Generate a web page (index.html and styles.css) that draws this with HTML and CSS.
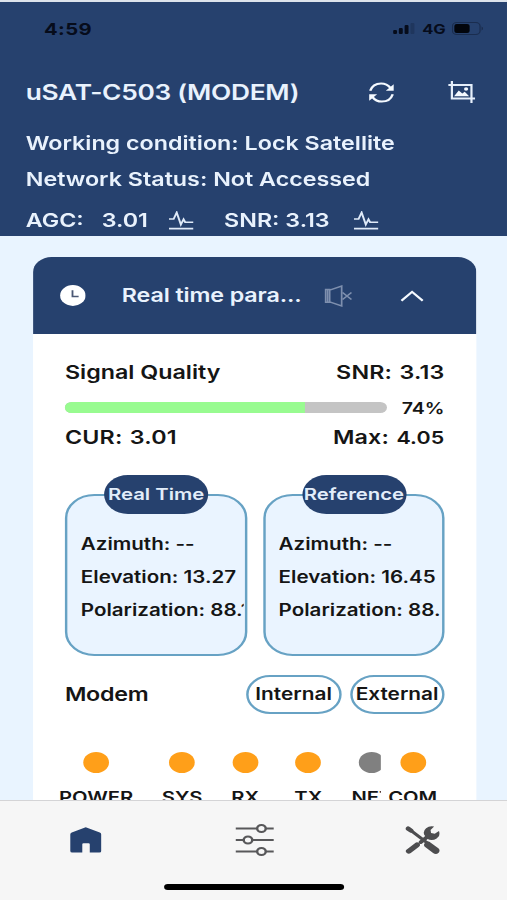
FILE: index.html
```
<!DOCTYPE html>
<html lang="en">
<head>
    <meta charset="UTF-8">
    <meta name="viewport" content="width=device-width, initial-scale=1.0">
    <title>uSAT-C503</title>
    <link rel="stylesheet" href="styles.css">
</head>
<body>
    <div class="screen">
        <header class="header">
            <div class="statusbar">
                <span class="time">4:59</span>
                <div class="signal">
                    <svg class="bars" width="18" height="11" viewBox="0 0 18 11">
                        <rect x="0" y="7" width="3.2" height="4" rx="1"/>
                        <rect x="4.7" y="5" width="3.2" height="6" rx="1"/>
                        <rect x="9.4" y="2" width="3.2" height="9" rx="1"/>
                        <rect x="14.2" y="0" width="3.2" height="11" rx="1" opacity=".2"/>
                    </svg>
                    <span class="network">4G</span>
                    <svg width="26" height="13" viewBox="0 0 26 13">
                        <rect x="0.5" y="0.5" width="22.5" height="12" rx="3.5" fill="none" stroke="#0a1020" opacity=".4"/>
                        <rect x="2" y="2" width="12.5" height="9" rx="2" fill="#02050c"/>
                        <path d="M24.3 4.5v4c1.4-.6 1.4-3.4 0-4z" fill="#0a1020" opacity=".45"/>
                    </svg>
                </div>
            </div>
            <div class="title-row">
                <h1 class="title">uSAT-C503 (MODEM)</h1>
                <svg class="refresh" width="21" height="21" viewBox="0 0 21 21" fill="none" stroke="#f4f9ff" stroke-width="2">
                    <path d="M1.3 8.8C2.8 3.5 6 1.4 10.2 1.4c3.3 0 5.8 1.6 7.6 4.5"/>
                    <path d="M19.7 12.2c-1.5 5.3-4.7 7.4-8.9 7.4-3.3 0-5.8-1.6-7.6-4.5"/>
                    <path d="M20.5 2.2v6.5H14z" fill="#f4f9ff" stroke="none"/>
                    <path d="M.5 18.8v-6.500H7z" fill="#f4f9ff" stroke="none"/>
                </svg>
                <svg width="22" height="22" viewBox="0 0 22 22" fill="none" stroke="#e6effb" stroke-width="1.8">
                    <path d="M3 0v17.500h19M0 4h19v18"/>
                    <path d="M4.800 15.200l3.800-5.800 2.900 3 2-1.700 3.600 4.500z" fill="#f4f9ff" stroke="none"/>
                    <circle cx="14.600" cy="8" r="1.700" fill="#f4f9ff" stroke="none"/>
                </svg>
            </div>
            <p class="line working">Working condition: Lock Satellite</p>
            <p class="line">Network Status: Not Accessed</p>
            <div class="line levels">
                <span class="agc">AGC:</span>
                <span class="agc-value">3.01</span>
                <svg class="pulse" width="20" height="19" viewBox="0 0 20 19">
                    <path d="M0 8h3.800L6.300 1.500l3.400 12 2.200-5.200 1.300 2.900H20"/>
                    <path d="M0 17.600h20"/>
                </svg>
                <span class="snr">SNR: 3.13</span>
                <svg class="pulse" width="20" height="19" viewBox="0 0 20 19">
                    <path d="M0 8h3.800L6.300 1.500l3.400 12 2.200-5.200 1.300 2.900H20"/>
                    <path d="M0 17.600h20"/>
                </svg>
            </div>
        </header>

        <main class="content">
            <section class="card">
                <div class="card-header">
                    <svg width="21" height="21" viewBox="0 0 21 21">
                        <circle cx="10.500" cy="10.500" r="10.400" fill="#fff"/>
                        <path d="M10.200 5.200v6.200h5" fill="none" stroke="#4b5874" stroke-width="1.500"/>
                    </svg>
                    <h2 class="card-title">Real time para...</h2>
                    <svg class="mute" width="23" height="22" viewBox="0 0 23 22" fill="none" stroke="#7e8fae" stroke-width="1.400">
                        <path d="M.8 4.500h3.400v12.700H.8zM2.500 4.500v12.700M4.200 5.200L14 1v20l-9.800-4.200"/>
                        <path d="M14.700 7.500l7.300 7M22 7.500l-7.300 7"/>
                    </svg>
                    <svg width="19" height="12" viewBox="0 0 19 12" fill="none" stroke="#f4f9ff" stroke-width="2">
                        <path d="M.8 10.800l8.700-8.900 8.700 8.900"/>
                    </svg>
                </div>

                <div class="card-body">
                    <div class="row quality">
                        <span>Signal Quality</span>
                        <span class="reading">SNR: 3.13</span>
                    </div>
                    <div class="row progress">
                        <div class="track"><div class="fill" style="width: 74.4%"></div></div>
                        <span class="percent">74%</span>
                    </div>
                    <div class="row minmax">
                        <span class="reading">CUR: 3.01</span>
                        <span class="reading">Max: <span class="max-value">4.05</span></span>
                    </div>

                    <div class="panels">
                        <div class="panel">
                            <span class="badge">Real Time</span>
                            <p>Azimuth: --</p>
                            <p>Elevation: 13.27</p>
                            <p>Polarization: 88.1</p>
                        </div>
                        <div class="panel">
                            <span class="badge">Reference</span>
                            <p>Azimuth: --</p>
                            <p>Elevation: 16.45</p>
                            <p>Polarization: 88.</p>
                        </div>
                    </div>

                    <div class="row modem">
                        <span>Modem</span>
                        <div class="buttons">
                            <button class="pill">Internal</button>
                            <button class="pill">External</button>
                        </div>
                    </div>

                    <div class="leds">
                        <div class="led power"><i></i><span>POWER</span></div>
                        <div class="led"><i></i><span>SYS</span></div>
                        <div class="led"><i></i><span>RX</span></div>
                        <div class="led"><i></i><span>TX</span></div>
                        <div class="led net"><i></i><span>NET</span></div>
                        <div class="led com"><i></i><span>COM</span></div>
                    </div>
                </div>
            </section>
        </main>

        <footer class="footer">
            <nav class="tabs">
                <a class="tab">
                    <svg width="26" height="26" viewBox="0 0 26 26">
                        <path d="M13 .3L24.500 5.500Q25.700 6.200 25.700 7.500V24q0 1.600-1.600 1.600H16.300V17.200q0-1-1-1H11.200q-1 0-1 1V25.600H2Q.4 25.600.4 24V7.500Q.4 6.200 1.600 5.500z" fill="#26416e"/>
                    </svg>
                </a>
                <a class="tab">
                    <svg width="32" height="32" viewBox="0 0 32 32" fill="#f6f6f6" stroke="#58585a" stroke-width="2">
                        <path d="M.5 4.500h31M.5 16h31M.5 27.500h31"/>
                        <circle cx="21.500" cy="4.500" r="3.500"/>
                        <circle cx="10.500" cy="16" r="3.500"/>
                        <circle cx="21.500" cy="27.500" r="3.500"/>
                    </svg>
                </a>
                <a class="tab">
                    <svg width="28" height="28" viewBox="0 0 28 28" fill="none" stroke="#4d4d4f" stroke-linecap="round">
                        <path d="M2.800 25.200l6.700-6.300" stroke-width="4.800"/>
                        <path d="M12.500 16.200l6-6" stroke-width="3.500"/>
                        <path d="M2.300 2.600l2.200 1.900" stroke-width="4.200"/>
                        <path d="M4 4l14 13" stroke-width="3"/>
                        <path d="M18.600 19l6.200 5.600" stroke-width="6.400"/>
                        <path d="M23.500.6A6.500 6.500 0 0 0 15.400 8.800L17.800 12.800A6.500 6.500 0 0 0 27.500 5L24 7.800 21 7.100 20.600 4z" fill="#4d4d4f" stroke="none"/>
                    </svg>
                </a>
            </nav>
            <div class="home-indicator"></div>
        </footer>
    </div>
</body>
</html>
```

FILE: styles.css
```
* {
    box-sizing: border-box;
}
html {
    overflow: hidden;
}
body {
    margin: 0;
    overflow: hidden;
    background: #e9f4ff;
}
h1, h2, p {
    margin: 0;
    font-weight: 600;
}
svg {
    display: block;
    flex-shrink: 0;
}
/* 414pt wide phone layout stretched to the 507px window */
.screen {
    width: 414px;
    height: 900px;
    display: flex;
    flex-direction: column;
    overflow: hidden;
    transform: scaleX(1.2246);
    transform-origin: 0 0;
    font-family: Inter, "Liberation Sans", sans-serif;
    font-weight: 600;
    color: #151515;
    white-space: nowrap;
}

/* header */
.header {
    height: 236px;
    flex-shrink: 0;
    padding: 0 21px;
    background: #26416e;
    border-top: 2px solid #dde3ec;
    color: #e9f2fd;
}
.statusbar {
    display: flex;
    align-items: center;
    justify-content: space-between;
    height: 53px;
    padding: 0 0 0 15px;
    color: #060c1b;
}
.time {
    font-size: 16.5px;
    font-weight: 700;
    letter-spacing: 0.3px;
}
.signal {
    display: flex;
    align-items: center;
    gap: 5px;
    margin-right: -2px;
}
.bars {
    fill: #060c1b;
    margin-right: 1px;
}
.network {
    font-size: 13.5px;
    font-weight: 700;
}
.title-row {
    display: flex;
    align-items: center;
    height: 74px;
    padding-right: 5px;
}
.title {
    font-size: 21.5px;
    letter-spacing: -0.25px;
    flex: 1;
}
.refresh {
    margin-right: 44px;
}
.line {
    font-size: 19px;
    height: 37px;
    line-height: 37px;
}
.working {
    margin-top: -4px;
    margin-bottom: -1px;
}
.levels {
    display: flex;
    align-items: center;
    height: 44px;
}
.agc {
    width: 62px;
}
.agc-value {
    width: 55px;
}
.pulse {
    fill: none;
    stroke: #dfeaf8;
    stroke-width: 1.6;
}
.snr {
    margin-left: 25px;
    width: 106px;
}

/* card */
.content {
    flex: 1;
    min-height: 0;
    overflow: hidden;
    padding: 21px 25px 0 27px;
    background: #e9f4ff;
}
.card {
    height: 600px;
    border-radius: 15px 15px 0 0;
    background: #fff;
    overflow: hidden;
}
.card-header {
    display: flex;
    align-items: center;
    height: 77px;
    padding: 0 43.5px 0 21.5px;
    background: #26416e;
    color: #e9f2fd;
}
.card-title {
    flex: 1;
    margin-left: 30px;
    font-size: 19px;
    letter-spacing: -0.1px;
}
.mute {
    margin-right: 39px;
}
.card-body {
    padding: 18px 26px 0;
}
.row {
    display: flex;
    align-items: center;
    justify-content: space-between;
    font-size: 19px;
}
.quality {
    height: 41px;
}
.reading {
    letter-spacing: 0.15px;
    word-spacing: 1px;
}
.progress {
    height: 29px;
}
.track {
    width: 263px;
    height: 11px;
    border-radius: 5.5px;
    background: #c4c4c4;
    overflow: hidden;
}
.fill {
    height: 100%;
    background: #98fb90;
}
.percent {
    font-size: 16px;
}
.minmax {
    height: 31px;
}
.max-value {
    font-size: 17.5px;
}

/* antenna angles */
.panels {
    display: flex;
    gap: 13px;
    margin-top: 41px;
}
.panel {
    position: relative;
    flex: 1;
    min-width: 0;
    height: 162px;
    padding: 31px 1px 0 11px;
    border: 2px solid #67a2c4;
    border-radius: 24px;
    background: #eaf4ff;
}
.panel p {
    height: 33px;
    line-height: 34px;
    font-size: 16.8px;
    overflow: hidden;
}
.badge {
    position: absolute;
    top: -21px;
    left: 30px;
    width: 85px;
    height: 39px;
    border-radius: 20px;
    background: #26416e;
    color: #e2edfa;
    font-size: 16.6px;
    line-height: 39px;
    text-align: center;
}

/* modem */
.modem {
    height: 40px;
    margin-top: 18px;
    letter-spacing: -0.2px;
}
.buttons {
    display: flex;
    gap: 7px;
}
.pill {
    width: 77.5px;
    height: 39px;
    padding: 0;
    border: 2px solid #67a2c4;
    border-radius: 20px;
    background: #fff;
    color: #151515;
    font: inherit;
    font-size: 17px;
}
.leds {
    display: flex;
    margin: 38px -6px 0 -5px;
    font-size: 16.5px;
}
.led {
    width: 51.5px;
    flex-shrink: 0;
    display: flex;
    flex-direction: column;
    align-items: center;
}
.led i {
    width: 21px;
    height: 21px;
    border-radius: 50%;
    background: #ff9f19;
}
.led span {
    margin-top: 14px;
}
.power {
    width: 61px;
    margin-right: 14px;
}
.net {
    width: 24px;
    margin-left: 9.5px;
    overflow: hidden;
    align-items: flex-start;
}
.net i {
    margin-left: 6px;
    background: #808080;
}
.com {
    width: 52px;
}

/* bottom tabs */
.footer {
    height: 100px;
    flex-shrink: 0;
    background: #f6f6f6;
    border-top: 1px solid #d4d4d6;
}
.tabs {
    display: flex;
    height: 78px;
    padding-left: 1px;
}
.tab {
    flex: 1;
    display: flex;
    align-items: center;
    justify-content: center;
}
.home-indicator {
    width: 147px;
    height: 6px;
    margin: 5px auto 0;
    border-radius: 3px;
    background: #000;
}
```
